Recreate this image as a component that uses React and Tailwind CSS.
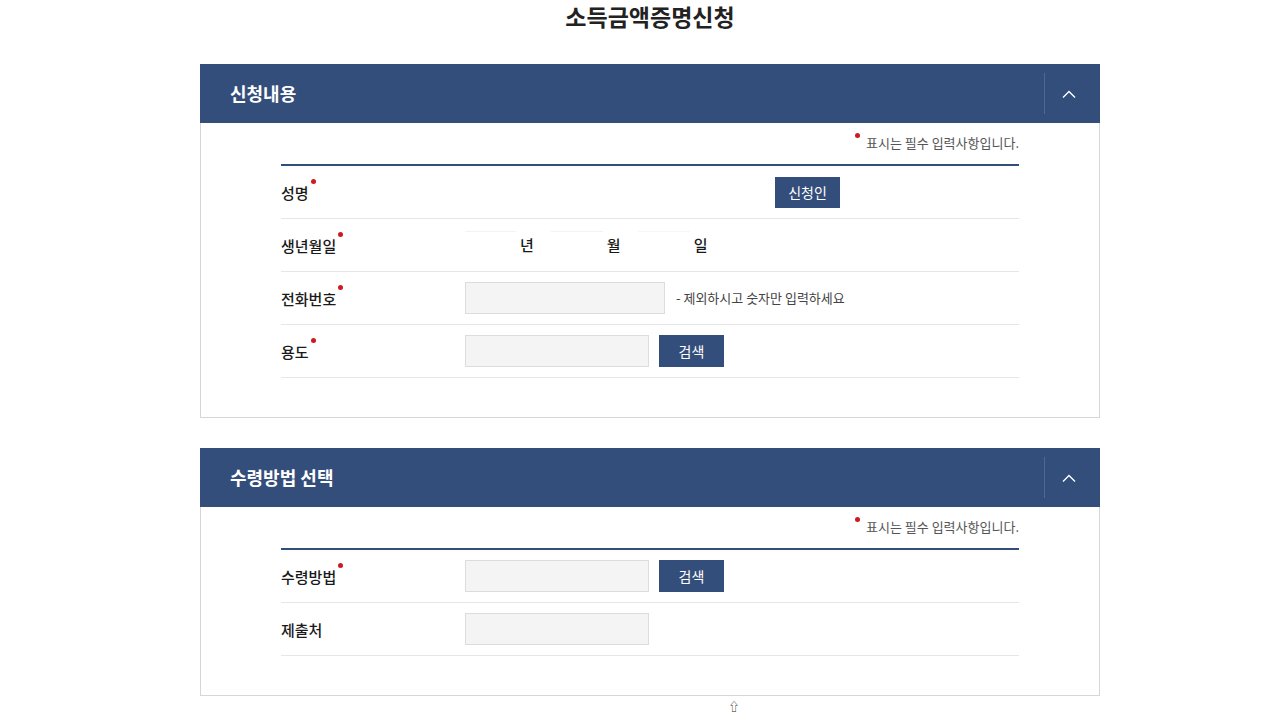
import React from 'react';

const Req = () => <span className="absolute -right-[7px] -top-[3px] w-[5px] h-[5px] rounded-full bg-[#d0191f]" />;

const Label = ({ children, required }) => (
    <div className="w-[184px] shrink-0">
        <span className="relative inline-block text-[15px] font-medium text-[#1a1a1a]">
            {children}
            {required && <Req />}
        </span>
    </div>
);

const Field = ({ w = 'w-[184px]' }) => (
    <div className={`${w} h-[32px] bg-[#f4f4f4] border border-[#dcdcdc]`} />
);

const Btn = ({ children }) => (
    <button className="w-[65px] h-[32px] bg-[#344e7b] text-white text-[14px]">{children}</button>
);

const Row = ({ children }) => (
    <div className="h-[53px] flex items-center border-b border-[#e6e6e6]">{children}</div>
);

const Panel = ({ title, children }) => (
    <section className="w-[900px] mx-auto">
        <div className="h-[59px] bg-[#344e7b] flex items-center pl-[30px]">
            <h2 className="text-[18px] font-bold text-white flex-1">{title}</h2>
            <div className="h-[41px] w-px bg-[#4f6893]" />
            <button className="w-[55px] h-[41px] pr-[7px] flex items-center justify-center">
                <svg width="14" height="8" viewBox="0 0 14 8" fill="none" stroke="white" strokeWidth="1.4">
                    <path d="M1 7.5 L7 1.5 L13 7.5" />
                </svg>
            </button>
        </div>
        <div className="border border-t-0 border-[#d6d6d6] px-[80px] pt-[10px] pb-[39px]">
            <p className="text-right text-[13px] text-[#555] h-[31px] leading-[20px]">
                <span className="relative inline-block pl-[1px]">
                    <span className="absolute -left-[10px] top-[0px] w-[5px] h-[5px] rounded-full bg-[#d0191f]" />
                    표시는 필수 입력사항입니다.
                </span>
            </p>
            <div className="border-t-2 border-[#344e7b]">{children}</div>
        </div>
    </section>
);

export default function App() {
    return (
        <div className="min-h-screen bg-white font-['Noto_Sans_CJK_KR','Noto_Sans',sans-serif] pl-[12px]">
            <h1 className="text-center text-[23px] font-bold text-[#222] leading-[32px]">소득금액증명신청</h1>
            <div className="h-[32px]" />
            <Panel title="신청내용">
                <Row>
                    <Label required>성명</Label>
                    <div className="flex-1 flex justify-end pr-[179px]">
                        <button className="w-[65px] h-[31px] bg-[#344e7b] text-white text-[14px]">신청인</button>
                    </div>
                </Row>
                <Row>
                    <Label required>생년월일</Label>
                    <div className="flex items-center text-[15px] font-medium text-[#1a1a1a]">
                        <div className="w-[51px] h-[28px] border-t border-[#f3f3f3]" />
                        <span className="ml-[4px]">년</span>
                        <div className="w-[52px] h-[28px] ml-[17px] border-t border-[#f3f3f3]" />
                        <span className="ml-[4px]">월</span>
                        <div className="w-[52px] h-[28px] ml-[17px] border-t border-[#f7f7f7]" />
                        <span className="ml-[4px]">일</span>
                    </div>
                </Row>
                <Row>
                    <Label required>전화번호</Label>
                    <Field w="w-[200px]" />
                    <span className="ml-[11px] text-[13px] text-[#444]">- 제외하시고 숫자만 입력하세요</span>
                </Row>
                <Row>
                    <Label required>용도</Label>
                    <Field />
                    <div className="ml-[10px]"><Btn>검색</Btn></div>
                </Row>
            </Panel>
            <div className="h-[30px]" />
            <Panel title="수령방법 선택">
                <Row>
                    <Label required>수령방법</Label>
                    <Field />
                    <div className="ml-[10px]"><Btn>검색</Btn></div>
                </Row>
                <Row>
                    <Label>제출처</Label>
                    <Field />
                </Row>
            </Panel>
            <div className="text-center text-[11px] text-[#222] leading-[11px] mt-[5px] pl-[168px]">⇧</div>
        </div>
    );
}
